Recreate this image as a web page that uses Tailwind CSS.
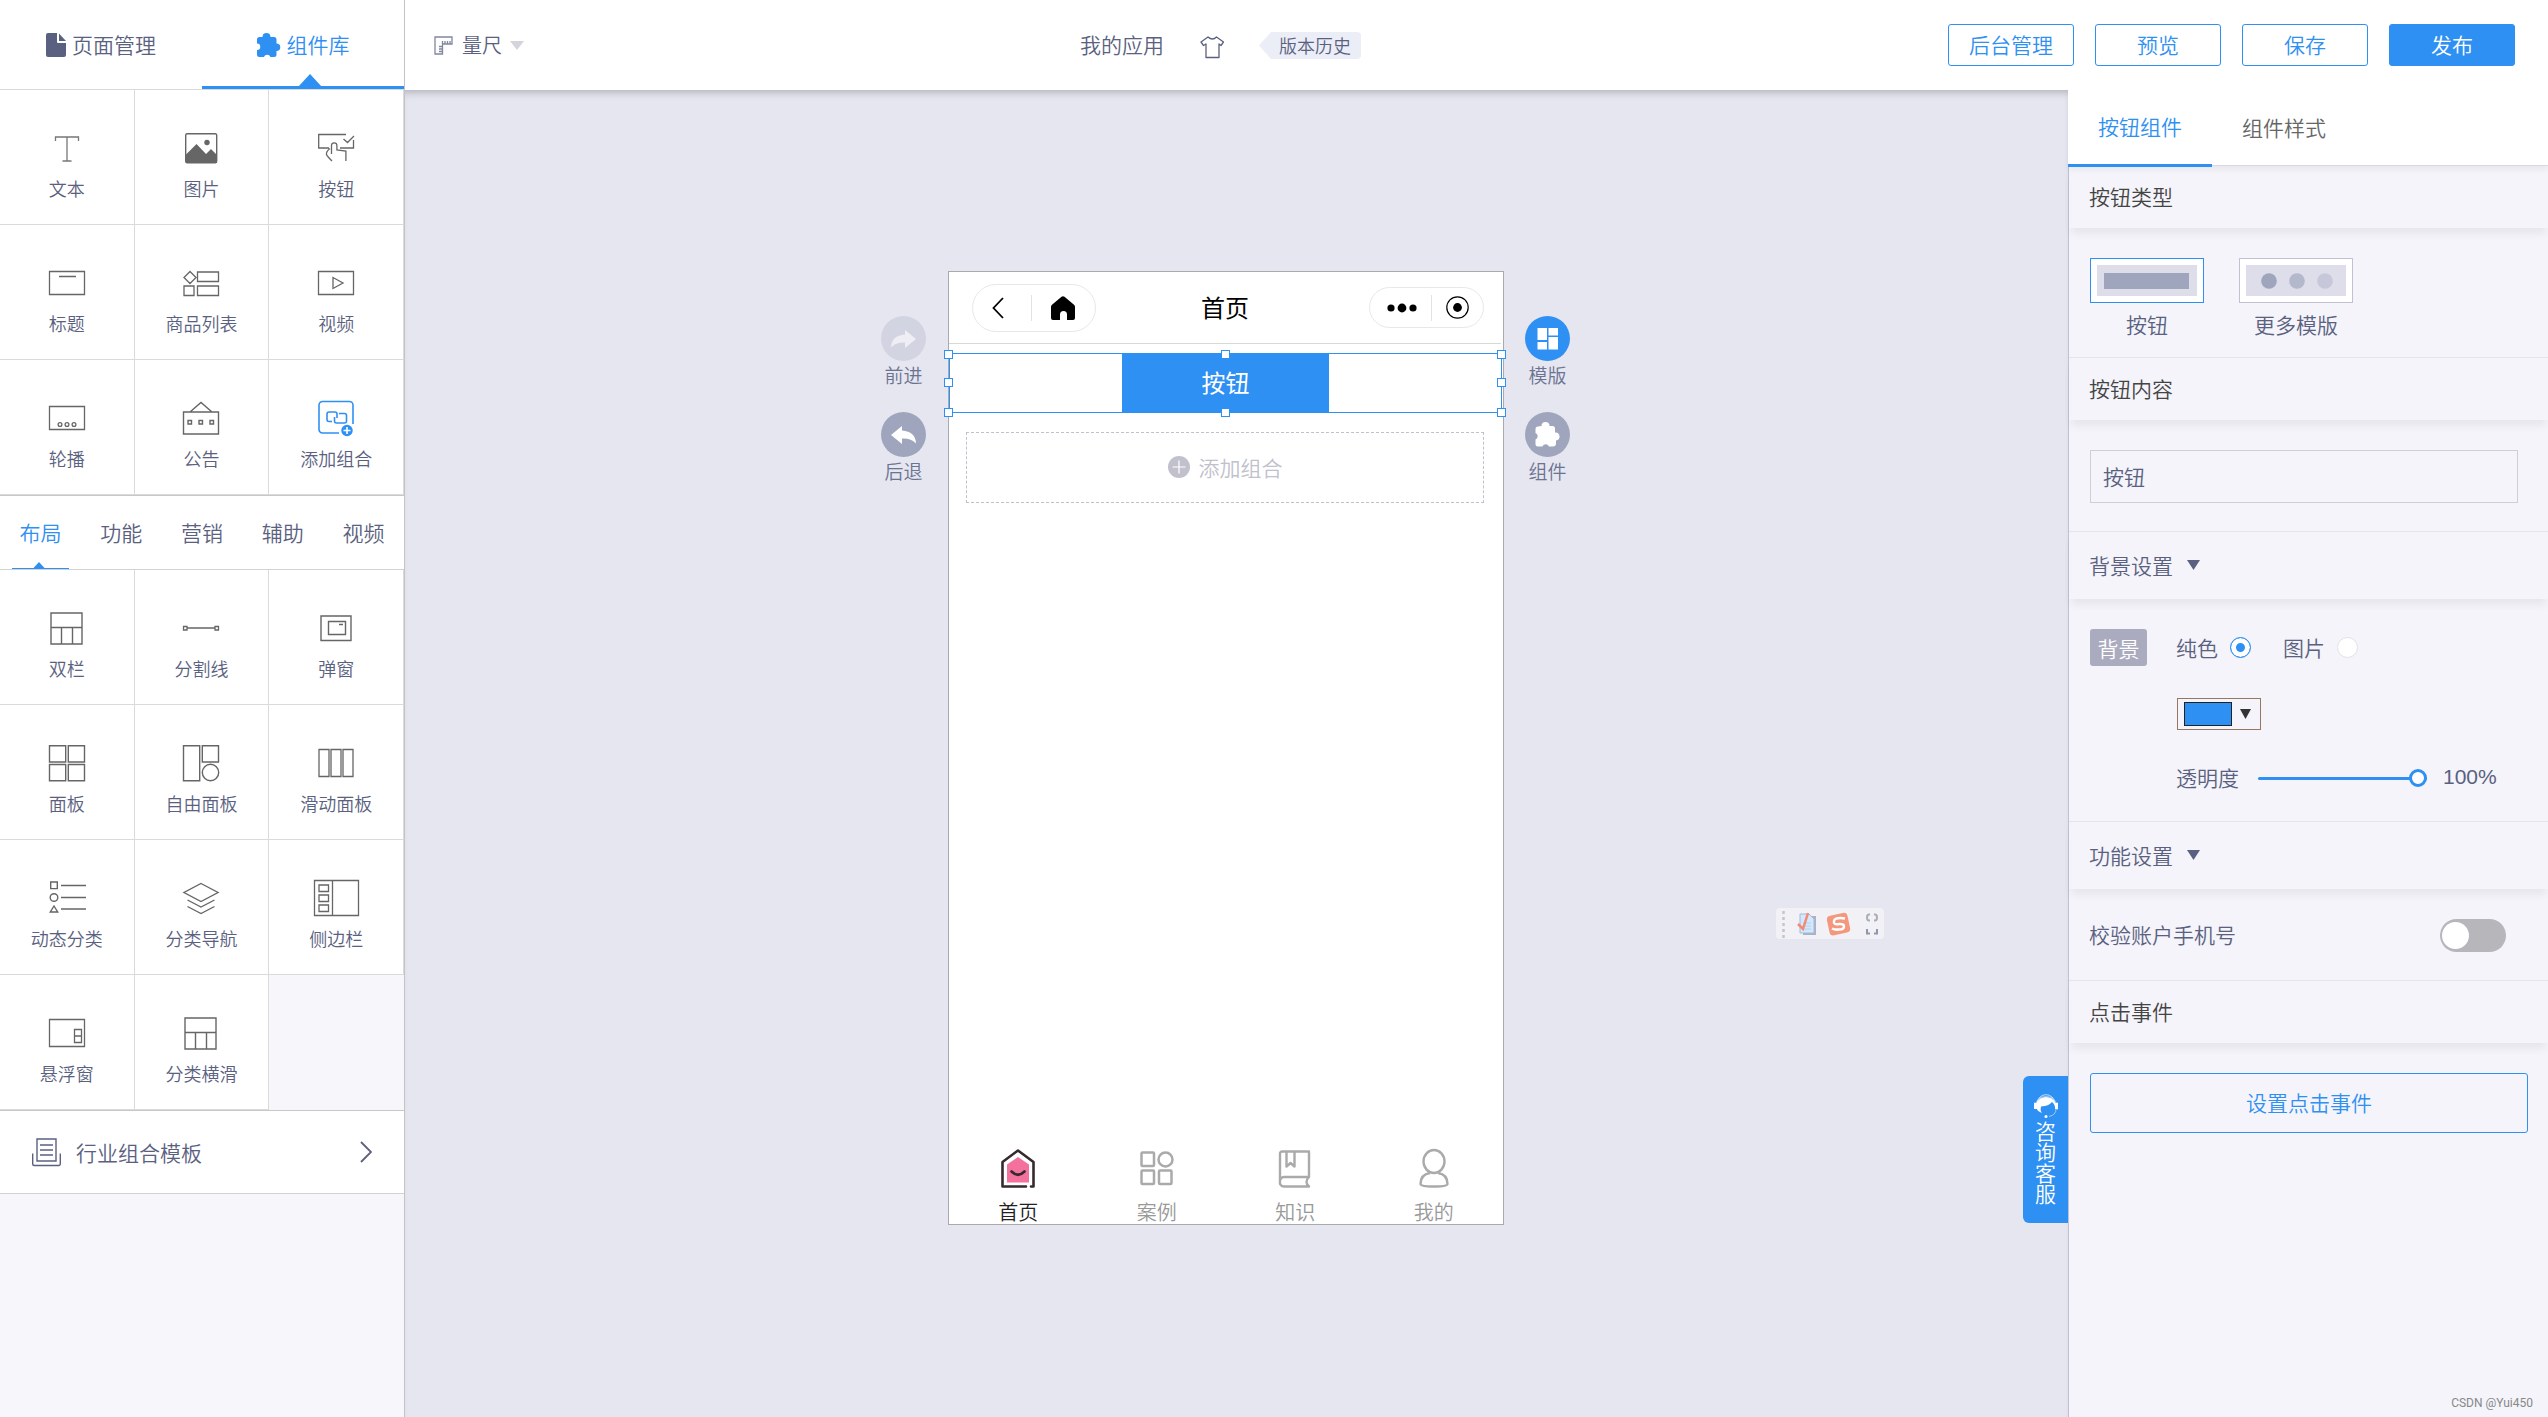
<!DOCTYPE html>
<html lang="zh-CN">
<head>
<meta charset="utf-8">
<title>我的应用</title>
<script src="https://cdn.jsdelivr.net/npm/@tailwindcss/browser@4"></script>
</head>
<body class="flex h-screen overflow-hidden bg-white font-['Noto_Sans_CJK_SC',sans-serif] text-[21px] leading-[30px] font-[350] text-[#5a6180]">

<!-- component library -->
<aside class="flex w-[405px] shrink-0 flex-col border-r border-[#c4c4c8] bg-[#f6f6fb]">
  <nav class="grid h-[90px] grid-cols-2 border-b border-[#dadada] bg-white [&_span]:pb-[2px]">
    <a href="#pages" class="flex items-center justify-center gap-[6px] pt-px">
      <svg class="h-6 w-5" viewBox="0 0 20 24" fill="#5a6180"><path d="M2 0h9v9a1 1 0 0 0 1 1h8v12a2 2 0 0 1-2 2H2a2 2 0 0 1-2-2V2a2 2 0 0 1 2-2z"/><path d="M13 0.500v7.500h7z"/></svg>
      <span>页面管理</span>
    </a>
    <a href="#library" class="relative flex items-center justify-center gap-[6px] pt-px text-[#2f90f3]">
      <svg class="h-6 w-6" viewBox="0 0 24 24" fill="#2f90f3"><path d="M5.500 4a4 4 0 0 1 8 0h3.500a2.500 2.500 0 0 1 2.500 2.500V10.500a3.600 3.600 0 0 1 0 7.500V21.500a2.500 2.500 0 0 1-2.500 2.500H13.500a3.600 3.600 0 0 0-6.600 0H2.500A2.500 2.500 0 0 1 0 21.500V17a3.200 3.200 0 0 0 0-6.500V6.500A2.500 2.500 0 0 1 2.500 4z"/></svg>
      <span>组件库</span>
      <svg class="absolute bottom-0 left-24 h-[15px] w-6" viewBox="0 0 24 15" fill="#2f90f3"><path d="M12 0l12 13H0z"/></svg>
      <i class="absolute inset-x-0 bottom-0 h-[3px] bg-[#2f90f3]"></i>
    </a>
  </nav>

  <div class="grid grid-cols-3 text-lg leading-7 [&>button]:flex [&>button]:h-[135px] [&>button]:flex-col [&>button]:items-center [&>button]:gap-2 [&>button]:border-r [&>button]:border-b [&>button]:border-[#dadada] [&>button]:bg-white [&>button]:pt-10 [&_svg]:h-9 [&_svg]:shrink-0 [&_svg]:overflow-visible">
    <button><svg class="w-9" viewBox="0 0 36 36" fill="none" stroke="#777" stroke-width="1.300"><path d="M6.500 11V7h23v4M18 7v24M13.500 31h9"/></svg>文本</button>
    <button><svg class="w-9" viewBox="0 0 36 36"><rect x="2.700" y="3.700" width="31" height="29" rx="1.500" fill="none" stroke="#666" stroke-width="1.400"/><path d="M2.500 25L13.500 14l9.500 10 5-5 6 6v6.500a1.500 1.500 0 0 1-1.500 1.500h-28a1.500 1.500 0 0 1-1.500-1.500z" fill="#666"/><circle cx="24" cy="12.500" r="2.700" fill="#666"/></svg>图片</button>
    <button><svg class="w-9" viewBox="0 0 36 36" fill="none" stroke="#666" stroke-width="1.300"><path d="M28 4.500H.7V18H11M35.500 10v8H22M25.500 9l4 3.500L36 6M13.500 24V15.500a2.700 2.700 0 0 1 5.400 0V20l9 1v10M12 18.500q-4 3-3.500 6 .5 1.500 5.500 6.500"/></svg>按钮</button>
    <button><svg class="w-9" viewBox="0 0 36 36" fill="none" stroke="#666" stroke-width="1.300"><path d="M.5 6.500h35v23H.5zM10 11.500h17"/></svg>标题</button>
    <button><svg class="w-9" viewBox="0 0 36 36" fill="none" stroke="#666" stroke-width="1.300"><path d="M7 6.500l6 6-6 6-6-6zM14.500 7h21v9.500h-21zM1 21h10v9.500H1zM14.500 21h21v9.500h-21z"/></svg>商品列表</button>
    <button><svg class="w-9" viewBox="0 0 36 36" fill="none" stroke="#666" stroke-width="1.300"><path d="M.5 6.500h35v23H.5zM15 12.500v11l10-5.500z"/></svg>视频</button>
    <button><svg class="w-9" viewBox="0 0 36 36" fill="none" stroke="#666" stroke-width="1.300"><path d="M.5 6.500h35v23H.5z"/><circle cx="11" cy="24.500" r="1.900"/><circle cx="18" cy="24.500" r="1.900"/><circle cx="25" cy="24.500" r="1.900"/></svg>轮播</button>
    <button><svg class="w-9" viewBox="0 0 36 36" fill="none" stroke="#666" stroke-width="1.400"><path d="M.5 12h35v22H.5zM7 12L18 2.500 29 12M5 20.500h3.500V24H5zM16 20.500h3.500V24H16zM27 20.500h3.500V24H27z"/></svg>公告</button>
    <button><svg class="w-9" viewBox="0 0 36 36" fill="none" stroke="#2f90f3" stroke-width="1.600"><path d="M35 24V5a3.500 3.500 0 0 0-3.500-3.500h-27A3.500 3.500 0 0 0 1 5v24.500A3.500 3.500 0 0 0 4.500 33H21"/><path d="M14 21.500h-3a2 2 0 0 1-2-2V14a2 2 0 0 1 2-2h6a2 2 0 0 1 2 2v4M21 13.500h5.500a2 2 0 0 1 2 2V21a2 2 0 0 1-2 2h-8a2 2 0 0 1-2-2v-4"/><circle cx="29" cy="30.500" r="5.700" fill="#2f90f3" stroke="none"/><path d="M29 27v7M25.500 30.500h7" stroke="#fff"/></svg>添加组合</button>
  </div>

  <nav class="grid h-[75px] grid-cols-5 border-t border-b border-t-[#c8c8c8] border-b-[#d2d2d2] bg-white [&>a]:flex [&>a]:items-center [&>a]:justify-center [&>a]:pb-[2px]">
    <a href="#layout" class="relative text-[#2f90f3]">布局
      <svg class="absolute inset-x-3 bottom-0 h-[7px] w-[57px]" viewBox="0 0 57 7" fill="#2f90f3"><path d="M0 6h57v1H0zM27 0l6 6.500H21z"/></svg>
    </a>
    <a href="#function">功能</a>
    <a href="#marketing">营销</a>
    <a href="#assist">辅助</a>
    <a href="#video">视频</a>
  </nav>

  <div class="grid grid-cols-3 text-lg leading-7 [&>button]:flex [&>button]:h-[135px] [&>button]:flex-col [&>button]:items-center [&>button]:gap-2 [&>button]:border-r [&>button]:border-b [&>button]:border-[#dadada] [&>button]:bg-white [&>button]:pt-10 [&_svg]:h-9 [&_svg]:shrink-0 [&_svg]:overflow-visible">
    <button><svg class="w-9" viewBox="0 0 36 36" fill="none" stroke="#666" stroke-width="1.400"><path d="M2 3h31v31H2zM2 17.500h31M12.500 17.500V34M23.500 17.500V34"/></svg>双栏</button>
    <button><svg class="w-9" viewBox="0 0 36 36" fill="none" stroke="#666" stroke-width="1.300"><path d="M.5 16.500H4V20H.5zM32 16.500h3.500V20H32zM4 18h28"/></svg>分割线</button>
    <button><svg class="w-9" viewBox="0 0 36 36" fill="none" stroke="#666" stroke-width="1.400"><path d="M3 6h30v24.500H3zM10.500 11.500h17v13h-17zM21 14.500h4"/></svg>弹窗</button>
    <button><svg class="w-9" viewBox="0 0 36 36" fill="none" stroke="#666" stroke-width="1.400"><path d="M.5.700h16.200V17H.5zM19.300.700h16.200V17H19.300zM.5 19.500h16.200v16.200H.5zM19.300 19.500h16.200v16.200H19.300z"/></svg>面板</button>
    <button><svg class="w-9" viewBox="0 0 36 36" fill="none" stroke="#666" stroke-width="1.400"><path d="M.5.700h16.200v35H.5zM19.300.700h16.200V17H19.300z"/><circle cx="27.500" cy="27.500" r="8.200"/></svg>自由面板</button>
    <button><svg class="w-9" viewBox="0 0 36 36" fill="none" stroke="#666" stroke-width="1.300"><path d="M1 4.500h10v27H1zM13 4.500h10v27H13zM25 4.500h10v27H25z"/></svg>滑动面板</button>
    <button><svg class="w-9" viewBox="0 0 36 36" fill="none" stroke="#666" stroke-width="1.400"><path d="M1.700 2h6.600v6.600H1.700zM5 26l3.700 6H1.300zM12 5.500h25M12 17.500h25M12 29h25"/><circle cx="5" cy="17.500" r="3.800"/></svg>动态分类</button>
    <button><svg class="w-9" viewBox="0 0 36 36" fill="none" stroke="#666" stroke-width="1.400"><path d="M18 3.500l17 9-17 9-17-9zM4.500 20L18 27l13.500-7M4.500 26.500l13.500 7 13.500-7"/></svg>分类导航</button>
    <button><svg class="w-[45px]" viewBox="0 0 45 36" fill="none" stroke="#666" stroke-width="1.300"><path d="M.5.500h44v35H.5zM18.500.500v35M5 5h9.500v6.500H5zM5 15h9.500v6.500H5zM5 25h9.500v6.500H5z"/></svg>侧边栏</button>
    <button><svg class="w-9" viewBox="0 0 36 36" fill="none" stroke="#666" stroke-width="1.300"><path d="M.5 4.500h35v27H.5zM25.500 14.500h7v13h-7zM25.500 21h7"/></svg>悬浮窗</button>
    <button><svg class="w-9" viewBox="0 0 36 36" fill="none" stroke="#666" stroke-width="1.400"><path d="M2 3h31v31H2zM2 17.500h31M12.500 17.500V34M23.500 17.500V34"/></svg>分类横滑</button>
  </div>

  <button class="flex h-[84px] items-center border-t border-b border-t-[#c8c8c8] border-b-[#d2d2d2] bg-white pr-8 pl-8">
    <svg class="h-[29px] w-[29px]" viewBox="0 0 29 29" fill="none" stroke="#5a6180" stroke-width="1.400"><path d="M5 1h19v22H5zM8 7h13M8 12h13M8 17h13M.7 15.500V26a1.500 1.500 0 0 0 1.500 1.500h24.600a1.500 1.500 0 0 0 1.500-1.500V15.500"/></svg>
    <span class="ml-[15px] pb-px">行业组合模板</span>
    <svg class="ml-auto h-[22px] w-3" viewBox="0 0 12 22" fill="none" stroke="#5a6180" stroke-width="1.800"><path d="M1 1l10 10L1 21"/></svg>
  </button>
</aside>

<div class="flex min-w-0 flex-1 flex-col">
  <header class="relative z-10 flex h-[90px] shrink-0 items-center bg-white">
    <div class="flex flex-[646] items-center pl-[29px]">
      <button class="flex items-center text-xl">
        <svg class="h-[19px] w-[19px]" viewBox="0 0 19 19" fill="none" stroke="#8086a0" stroke-width="1.300"><path d="M1 1h17v7H8.500v10H1zM8.500 5v3M11 5v3M13.500 5v3M16 5v3M5 10.500h3.500M5 13h3.500M5 15.500h3.500"/></svg>
        <span class="ml-[9px]">量尺</span>
        <svg class="ml-2 h-[9px] w-[14px]" viewBox="0 0 14 9" fill="#d3d4de"><path d="M0 0h14L7 9z"/></svg>
      </button>
    </div>
    <div class="flex items-center">
      <h1 class="pb-[2px]">我的应用</h1>
      <button aria-label="主题" class="ml-[36px] pt-[3px]"><svg class="h-6 w-6" viewBox="0 0 24 24" fill="none" stroke="#5a6180" stroke-width="1.300" stroke-linejoin="round"><path d="M8 2L1 7l2.500 3.500L6 9v13.500h13V9l2 1.500L23.500 7l-7-5q-4 4-8.500 0z"/></svg></button>
      <button class="ml-[35px] flex h-[27px] items-center text-lg">
        <svg class="h-[27px] w-3" viewBox="0 0 12 27" fill="#eceef7"><path d="M12 0L0 13.500 12 27z"/></svg>
        <span class="rounded-r-sm bg-[#eceef7] pr-[10px] pl-2 leading-[27px]">版本历史</span>
      </button>
    </div>
    <div class="flex flex-[1154] justify-end gap-[21px] pr-[33px] [&>button]:h-[42px] [&>button]:w-[126px] [&>button]:rounded-[3px] [&>button]:border [&>button]:border-[#2f90f3] [&>button]:pb-[2px]">
      <button class="text-[#2f90f3]">后台管理</button>
      <button class="text-[#2f90f3]">预览</button>
      <button class="text-[#2f90f3]">保存</button>
      <button class="bg-[#2f90f3] text-white">发布</button>
    </div>
  </header>

  <div class="flex min-h-0 flex-1">
    <!-- canvas -->
    <main class="relative flex min-w-0 flex-1 items-start justify-center bg-[#e5e6ef] pt-[181px] pr-[22px] shadow-[inset_0_8px_8px_-6px_rgba(0,0,0,0.25)]">
      <div class="mr-[22px] flex flex-col gap-[23px] pt-[45px] text-[19px] leading-7 text-[#6c7392] [&>button]:flex [&>button]:flex-col [&>button]:items-center">
        <button>
          <svg class="h-[45px] w-[45px]" viewBox="0 0 45 45"><circle cx="22.500" cy="22.500" r="22.500" fill="#d2d4e1"/><path d="M24 14l11 9-11 9v-5.500q-9-.5-14 5Q10.500 19.500 24 18.500z" fill="#eeeef4"/></svg>前进
        </button>
        <button>
          <svg class="h-[45px] w-[45px]" viewBox="0 0 45 45"><circle cx="22.500" cy="22.500" r="22.500" fill="#9fa5bd"/><path d="M21 14L10 23l11 9v-5.500q9-.5 14 5Q34.500 19.500 21 18.500z" fill="#fff"/></svg>后退
        </button>
      </div>

      <section class="flex h-[954px] w-[556px] flex-col border border-[#a9aaab] bg-white">
        <div class="mr-[2px] grid h-[72px] grid-cols-[1fr_auto_1fr] items-center border-b border-[#d8d8d8] text-2xl text-black">
          <div class="ml-[23px] flex h-12 w-[124px] items-center justify-between rounded-full border border-[#e8e8e8] pr-5 pl-[19px]">
            <svg class="h-[22px] w-3" viewBox="0 0 12 22" fill="none" stroke="#000" stroke-width="1.800"><path d="M11 1L1.500 11 11 21"/></svg>
            <i class="ml-2 h-[26px] w-px bg-[#e2e2e2]"></i>
            <svg class="h-6 w-6" viewBox="0 0 24 24"><path d="M10.500.700a2.500 2.500 0 0 1 3 0L23 8.700a2.500 2.500 0 0 1 1 2V22a2 2 0 0 1-2 2h-6v-5.500a3.500 3.500 0 0 0-7 0V24H2a2 2 0 0 1-2-2V10.700a2.500 2.500 0 0 1 1-2z"/></svg>
          </div>
          <h2 class="pb-[2px] font-normal">首页</h2>
          <div class="mr-[17px] flex h-[41px] w-[115px] items-center justify-between justify-self-end rounded-full border border-[#e8e8e8] pr-[14px] pl-[17px]">
            <svg class="h-[10px] w-[30px]" viewBox="0 0 30 10"><circle cx="4" cy="5" r="3.600"/><circle cx="15" cy="5" r="4.400"/><circle cx="26" cy="5" r="3.600"/></svg>
            <i class="h-[26px] w-px bg-[#e2e2e2]"></i>
            <svg class="h-[23px] w-[23px]" viewBox="0 0 23 23"><circle cx="11.500" cy="11.500" r="10.700" fill="none" stroke="#000" stroke-width="1.200"/><circle cx="11.500" cy="11.500" r="4.400"/></svg>
          </div>
        </div>

        <div class="relative mt-[9px] mr-[1px] flex h-[60px] justify-center border border-[#2f90f3] [&>i]:absolute [&>i]:h-[9px] [&>i]:w-[9px] [&>i]:border [&>i]:border-[#2f90f3] [&>i]:bg-white">
          <button class="-my-px w-[207px] bg-[#2f90f3] pb-[2px] text-2xl font-normal text-white">按钮</button>
          <i class="-top-[4px] -left-[6px]"></i><i class="top-[24px] -left-[6px]"></i><i class="-bottom-[5px] -left-[6px]"></i>
          <i class="-top-[4px] -right-[5px]"></i><i class="top-[24px] -right-[5px]"></i><i class="-right-[5px] -bottom-[5px]"></i>
          <i class="-top-[4px] left-1/2 -ml-[5px]"></i><i class="-bottom-[5px] left-1/2 -ml-[5px]"></i>
        </div>

        <button class="mt-[19px] mr-[19px] ml-[17px] flex h-[71px] items-center justify-center gap-[9px] border border-dashed border-[#c0c1cc] pb-[2px] text-[#c0c1cc]">
          <svg class="h-[22px] w-[22px]" viewBox="0 0 22 22"><circle cx="11" cy="11" r="11" fill="#c0c1cc"/><path d="M11 4.500v13M4.500 11h13" stroke="#fff" stroke-width="1.200"/></svg>
          添加组合
        </button>

        <nav class="mt-auto grid grid-cols-4 text-xl leading-6 text-[#999] [&>a]:flex [&>a]:flex-col [&>a]:items-center [&>a]:gap-3">
          <a href="#home" class="text-[#222]">
            <svg class="h-10 w-9" viewBox="0 0 36 40"><path d="M18 9l11 7.500V34.500H7V16.500z" fill="#f4719d"/><path d="M26 38.500H2.500V14L18 2.500 33.500 14v24.500H31" fill="none" stroke="#352a2f" stroke-width="2.600" stroke-linejoin="round" stroke-linecap="round"/><path d="M11.500 23.500q6.500 6.500 13 0" fill="none" stroke="#352a2f" stroke-width="2.600" stroke-linecap="round"/></svg>首页
          </a>
          <a href="#cases">
            <svg class="h-10 w-9" viewBox="0 0 36 40" fill="none" stroke="#aaa" stroke-width="2.500"><rect x="2.500" y="4.500" width="12.500" height="13.500" rx="1"/><circle cx="26.500" cy="11.500" r="7"/><rect x="2.500" y="22.500" width="12.500" height="13.500" rx="1"/><rect x="20" y="22.500" width="12.500" height="13.500" rx="1"/></svg>案例
          </a>
          <a href="#knowledge">
            <svg class="h-10 w-9" viewBox="0 0 36 40" fill="none" stroke="#aaa" stroke-width="2.400" stroke-linejoin="round"><path d="M3 34V5.500a2 2 0 0 1 2-2h27V29H7a4 4 0 0 0-4 4.500A4 4 0 0 0 7 38.500h25q-5-4.500 0-9.500M9.500 4v14.500l4-3.500 4 3.500V4"/></svg>知识
          </a>
          <a href="#mine">
            <svg class="h-10 w-9" viewBox="0 0 36 40" fill="none" stroke="#aaa" stroke-width="2.400"><ellipse cx="18" cy="13.500" rx="10.500" ry="11.500"/><path d="M14 25Q4.500 26.500 4.500 36q0 2.500 13.500 2.500T31.500 36Q31.500 26.500 22 25"/></svg>我的
          </a>
        </nav>
      </section>

      <div class="ml-[21px] flex flex-col gap-[23px] pt-[45px] text-[19px] leading-7 text-[#6c7392] [&>button]:flex [&>button]:flex-col [&>button]:items-center">
        <button>
          <svg class="h-[45px] w-[45px]" viewBox="0 0 45 45"><circle cx="22.500" cy="22.500" r="22.500" fill="#2f90f3"/><path d="M12.500 12h9.500v12h-9.500zM23.500 12h9.500v7.500h-9.500zM12.500 26h9.500v7.500h-9.500zM23.500 21h9.500v12.500h-9.500z" fill="#fff"/></svg>模版
        </button>
        <button>
          <svg class="h-[45px] w-[45px]" viewBox="0 0 45 45"><circle cx="22.500" cy="22.500" r="22.500" fill="#9fa5bd"/><path transform="translate(10 10)" d="M6.500 4a4 4 0 0 1 8 0h3a2.500 2.500 0 0 1 2.500 2.500V10.500a4 4 0 0 1 1 8V21.500a3 3 0 0 1-3 3H14a3.600 3.600 0 0 0-6.600 0H3A2.500 2.500 0 0 1 .5 22V17.500a3.500 3.500 0 0 0 0-6.500V7A2.500 2.500 0 0 1 3 4.500z" fill="#fff"/></svg>组件
        </button>
      </div>

      <!-- input method bar floating over the canvas -->
      <div class="absolute right-[184px] bottom-[478px] flex h-[31px] w-[108px] items-center rounded-sm bg-[#f2f2f6] pl-[6px]">
        <svg class="h-[30px] w-[3px]" viewBox="0 0 3 30"><path d="M1.500 2v28" stroke="#c4c5ce" stroke-width="2.500" stroke-dasharray="3 3"/></svg>
        <svg class="ml-3 h-6 w-5" viewBox="0 0 20 24"><path d="M6 4h13v19H6z" fill="#aeb1c0"/><path d="M3 2h9l5 5v14H3z" fill="#d5e7fa" stroke="#9dbbe0"/><path d="M6 11h8M6 14h8M6 17h8" stroke="#b4d0f0"/><path d="M1 12l5 5L11 1" fill="none" stroke="#f38a76" stroke-width="2.500"/></svg>
        <svg class="ml-[10px] h-6 w-6" viewBox="0 0 24 24"><rect x="1" y="2" width="21" height="20" rx="4" transform="rotate(-12 12 12)" fill="#f4977d"/><path d="M18 6.500Q8 5 7 9t5 3q5-.5 5 2.500t-5 3q-4 .5-7-1" fill="none" stroke="#fff" stroke-width="2.500"/></svg>
        <svg class="ml-[15px] h-6 w-3" viewBox="0 0 12 24" fill="none" stroke-width="2"><path d="M4 2.500H3q-2 0-2 3t2 3h1M8 2.500h1q2 0 2 3t-2 3H8" stroke="#a9adb8"/><path d="M1 17v4.500h3M11 17v4.500H8" stroke="#8f97aa"/></svg>
      </div>

      <button class="absolute right-0 bottom-[194px] flex h-[147px] w-[45px] flex-col items-center rounded-l-md bg-[#2f90f3] pt-[18px] leading-[21px] text-white">
        <svg class="mb-[2px] h-6 w-6 shrink-0" viewBox="0 0 24 24"><path d="M3 9Q5 .7 12 .7T21 9" fill="none" stroke="#fff" stroke-opacity=".7"/><path d="M0 9h2Q4 2.500 12 2.500T22 9h2v6h-2q0 6-7 7.500" fill="none" stroke="#fff" stroke-opacity=".5"/><path d="M0 9h2.500Q5 3 12 3t9.500 6H24v6h-3q.5-4-3-7-3 4-11 4.500Q6 17 8 19 3 17 3 15H0z" fill="#fff"/><circle cx="12" cy="22.500" r="1.500" fill="#fff"/></svg>
        <span class="w-[21px]">咨询客服</span>
      </button>
    </main>

    <!-- property panel -->
    <aside class="relative z-20 flex w-[480px] shrink-0 flex-col border-l border-[#c0c1d3] bg-[#f4f4fa] [&>h3]:pb-[2px]">
      <nav class="relative z-10 -ml-px flex h-[76px] shrink-0 border-b border-[#d9d9df] bg-white shadow-[0_4px_6px_rgba(0,0,0,0.05)]">
        <a href="#component" class="-mb-[2px] flex w-36 items-center justify-center border-b-3 border-[#2f90f3] pb-[2px] text-[#2f90f3]">按钮组件</a>
        <a href="#style" class="flex w-36 items-center justify-center pb-[2px] text-[#666]">组件样式</a>
      </nav>

      <h3 class="flex h-[62px] items-center pl-5 text-[#444] shadow-[0_8px_8px_-2px_rgba(0,0,0,0.06)]">按钮类型</h3>
      <div class="flex h-[129px] gap-[35px] pt-[30px] pl-[21px] leading-[30px] [&>button]:flex [&>button]:w-[114px] [&>button]:flex-col [&>button]:items-center [&>button]:gap-[6px] [&_svg]:h-[45px] [&_svg]:w-[114px] [&_svg]:border [&_svg]:bg-white">
        <button><svg class="border-[#2f90f3]" viewBox="0 0 112 43"><path d="M6 6h100v31H6z" fill="#dddeea"/><path d="M13 14h85v16H13z" fill="#9fa5bd"/></svg>按钮</button>
        <button><svg class="border-[#c0c1d3]" viewBox="0 0 112 43"><path d="M6 6h100v31H6z" fill="#dddeea"/><circle cx="29" cy="22" r="7.800" fill="#9fa5bd"/><circle cx="57" cy="22" r="7.800" fill="#b4b8cd"/><circle cx="85" cy="22" r="7.800" fill="#c6c8da"/></svg>更多模版</button>
      </div>

      <h3 class="flex h-[63px] items-center border-t border-[#e4e4ec] pl-5 text-[#444] shadow-[0_8px_8px_-2px_rgba(0,0,0,0.06)]"><label for="content">按钮内容</label></h3>
      <div class="h-[111px] pt-[30px] pr-[30px] pl-[21px]">
        <input id="content" type="text" value="按钮" class="block h-[53px] w-full border border-[#d0d0d0] px-3 pb-[2px]">
      </div>

      <h3 class="flex h-[68px] items-center border-t border-[#e4e4ec] pl-5 shadow-[0_8px_8px_-2px_rgba(0,0,0,0.06)]">背景设置<svg class="ml-[14px] h-[10px] w-[13px]" viewBox="0 0 13 10" fill="#5a6180"><path d="M0 0h13L6.500 10z"/></svg></h3>
      <div class="flex h-[222px] pt-[30px] pl-[21px]">
        <span class="flex h-[37px] w-[57px] items-center justify-center rounded-[3px] bg-[#ababc0] text-white">背景</span>
        <div class="ml-[29px] flex flex-col">
          <div class="flex h-[37px] items-center [&>label]:pb-[2px]">
            <label for="solid">纯色</label>
            <input id="solid" type="radio" name="fill" checked class="ml-3 h-[21px] w-[21px] appearance-none rounded-full border border-[#2f90f3] bg-[#2f90f3] shadow-[inset_0_0_0_5px_white]">
            <label for="image" class="ml-8">图片</label>
            <input id="image" type="radio" name="fill" class="ml-3 h-[21px] w-[21px] appearance-none rounded-full border border-[#e2e2e6] bg-white">
          </div>
          <button aria-label="背景颜色" class="mt-8 ml-px flex h-8 w-[84px] items-center justify-between border border-[#967860] pr-[9px] pl-[6px]">
            <span class="h-6 w-12 border border-[#222] bg-[#2f90f3]"></span>
            <svg class="h-[10px] w-[11px]" viewBox="0 0 11 10" fill="#333"><path d="M0 0h11L5.500 10z"/></svg>
          </button>
          <div class="mt-8 flex items-center">
            <label for="opacity" class="pb-[2px]">透明度</label>
            <input id="opacity" type="range" value="100" class="mr-4 ml-[19px] h-[3px] w-[169px] appearance-none rounded-full bg-[#2f90f3] [&::-webkit-slider-thumb]:h-[18px] [&::-webkit-slider-thumb]:w-[18px] [&::-webkit-slider-thumb]:appearance-none [&::-webkit-slider-thumb]:rounded-full [&::-webkit-slider-thumb]:border-3 [&::-webkit-slider-thumb]:border-[#2f90f3] [&::-webkit-slider-thumb]:bg-white">
            <output for="opacity" class="pb-[2px] font-['Liberation_Sans',sans-serif] font-normal">100%</output>
          </div>
        </div>
      </div>

      <h3 class="flex h-[68px] items-center border-t border-[#e4e4ec] pl-5 shadow-[0_8px_8px_-2px_rgba(0,0,0,0.06)]">功能设置<svg class="ml-[14px] h-[10px] w-[13px]" viewBox="0 0 13 10" fill="#5a6180"><path d="M0 0h13L6.500 10z"/></svg></h3>
      <div class="flex h-[91px] items-center justify-between pt-[2px] pr-[42px] pl-5">
        <label for="verify" class="pb-1">校验账户手机号</label>
        <input id="verify" type="checkbox" class="flex h-[33px] w-[66px] appearance-none items-center rounded-full bg-[#b7b6bb] px-[2px] before:h-[27px] before:w-[27px] before:rounded-full before:bg-white before:content-['']">
      </div>

      <h3 class="flex h-[63px] items-center border-t border-[#e4e4ec] pl-5 text-[#444] shadow-[0_8px_8px_-2px_rgba(0,0,0,0.06)]">点击事件</h3>
      <div class="pt-[30px] pr-5 pl-[21px]">
        <button class="h-[60px] w-full rounded-[3px] border border-[#2f90f3] pb-[2px] text-[#2f90f3]">设置点击事件</button>
      </div>
      <small class="mt-auto mr-[15px] self-end font-[Roboto,sans-serif] text-xs leading-7 font-normal text-[#888]">CSDN @Yui450</small>
    </aside>
  </div>
</div>
</body>
</html>
